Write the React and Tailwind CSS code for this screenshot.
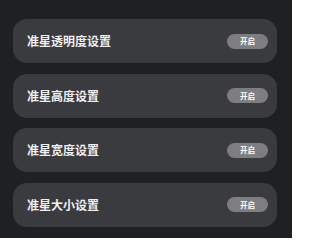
export default function App() {
  const items = ["准星透明度设置", "准星高度设置", "准星宽度设置", "准星大小设置"];

  return (
    <div
      className="w-[292px] h-[238px] bg-[#1f2024] pl-[13px] pr-[15px] pt-[19px] flex flex-col gap-[10.6px]"
      style={{ fontFamily: '"Noto Sans CJK SC", "Noto Sans", sans-serif' }}
    >
      {items.map((label) => (
        <div
          key={label}
          className="h-[44px] rounded-[14px] bg-[#3a3b3f] flex items-center justify-between pl-[14px] pr-[9px]"
        >
          <span className="text-[12px] font-bold text-[#f0f0f0] leading-none">{label}</span>
          <button className="w-[41px] h-[15px] rounded-full bg-[#7e7e80] text-white text-[7.5px] font-bold leading-none flex items-center justify-center">
            开启
          </button>
        </div>
      ))}
    </div>
  );
}
